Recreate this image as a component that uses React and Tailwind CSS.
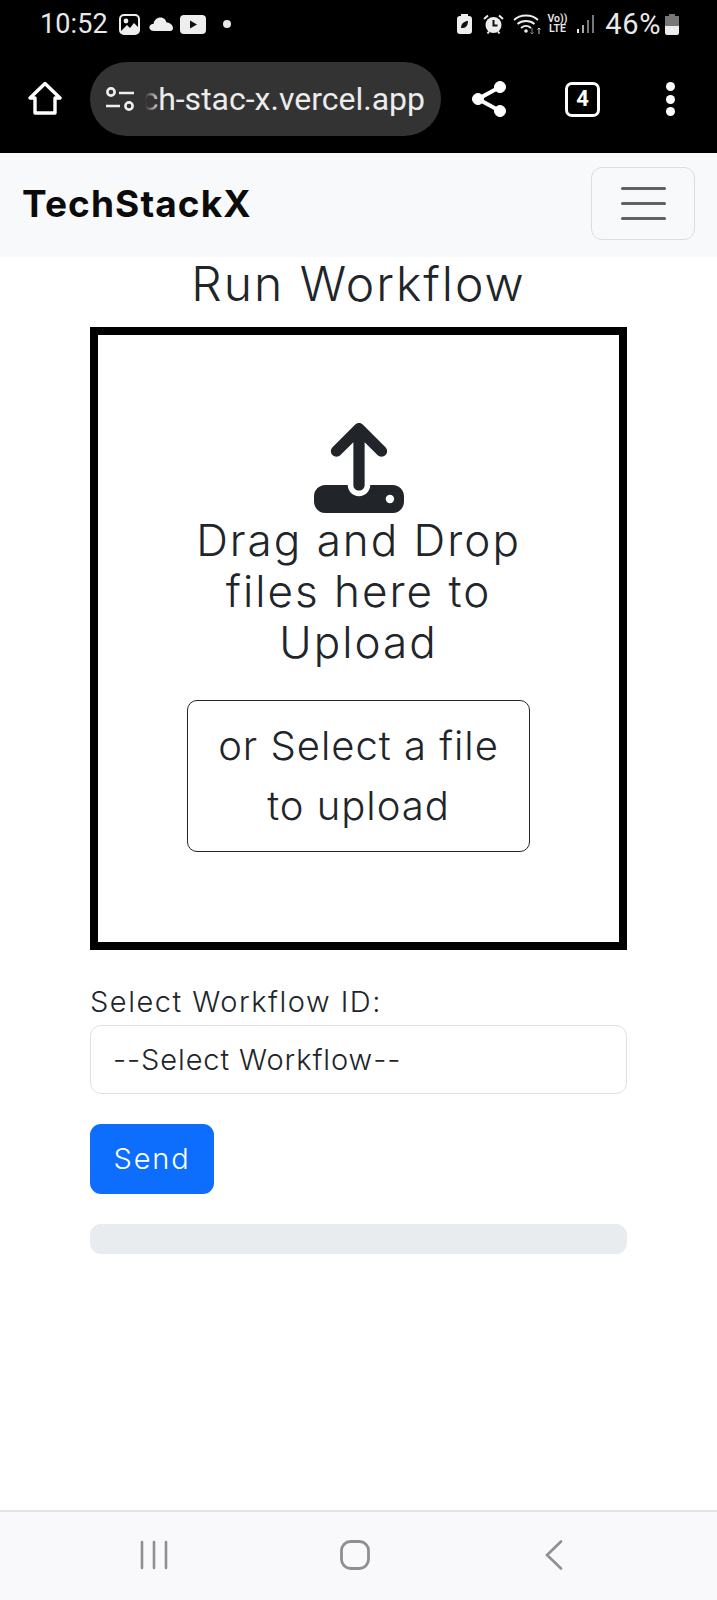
import { FaUpload } from 'react-icons/fa6';

const StatusLeft = () => (
  <div className="flex items-center">
    <span className="text-[27px] leading-none text-[#e8e8e8] font-['Roboto',sans-serif] tracking-[0.1px]">10:52</span>
    {/* gallery */}
    <svg className="ml-[11px]" width="21" height="21" viewBox="0 0 21 21">
      <rect x="1" y="1" width="19" height="19" rx="4" fill="none" stroke="#eee" strokeWidth="2" />
      <circle cx="7" cy="7" r="2.4" fill="#eee" />
      <path d="M2 17 L8 11 L11 14 L15 9 L19 13 V19 H2 Z" fill="#eee" />
    </svg>
    {/* cloud */}
    <svg className="ml-[9px]" width="24" height="14" viewBox="0 0 24 14">
      <path d="M5 14 C1 14 0 11 0.5 9.5 C1 7.5 3 7 4.5 7 C5 3 8 0.5 11.5 0.5 C15 0.5 17 3 17.5 5.5 C21 5.5 24 8 24 11 C24 13 23 14 21 14 Z" fill="#eee" />
    </svg>
    {/* youtube */}
    <svg className="ml-[7px]" width="26" height="19" viewBox="0 0 26 19">
      <rect width="26" height="19" rx="4" fill="#eee" />
      <path d="M10 5.5 L17 9.5 L10 13.5 Z" fill="#111" />
    </svg>
    <span className="ml-[17px] w-[8px] h-[8px] rounded-full bg-[#e8e8e8]" />
  </div>
);

const StatusRight = () => (
  <div className="flex items-center">
    {/* battery saver */}
    <svg width="15" height="20" viewBox="0 0 15 20">
      <rect x="4" y="0" width="7" height="3" fill="#eee" />
      <rect x="0" y="2" width="15" height="18" rx="3" fill="#eee" />
      <path d="M4 14 C4 9 8 7 11 7 C11 11 9 14 6 14 Z" fill="#111" />
    </svg>
    {/* alarm */}
    <svg className="ml-[11px]" width="21" height="21" viewBox="0 0 21 21">
      <circle cx="10.5" cy="11" r="8" fill="#eee" />
      <path d="M1 5 L5 1.5 M20 5 L16 1.5 M4.5 19.5 L6 17.5 M16.5 19.5 L15 17.5" stroke="#eee" strokeWidth="2" />
      <path d="M10.5 6 V11.5 H14.5" stroke="#111" strokeWidth="2" fill="none" />
    </svg>
    {/* wifi */}
    <svg className="ml-[9px]" width="29" height="21" viewBox="0 0 29 21">
      <path d="M1 6 C7 0 19 0 25 6 M4.5 10 C9 6 17 6 21.5 10 M8 14 C11 11.5 15 11.5 18 14" stroke="#eee" strokeWidth="1.8" fill="none" />
      <circle cx="13" cy="17" r="1.8" fill="#eee" />
      <path d="M19 14 V20 M17.5 18.5 L19 20 L20.5 18.5" stroke="#888" strokeWidth="1" fill="none" />
      <path d="M26 20 V14 M24.5 15.5 L26 14 L27.5 15.5" stroke="#ccc" strokeWidth="1" fill="none" />
    </svg>
    <div className="ml-[5px] flex flex-col items-center text-[10.5px] leading-[10px] font-semibold text-[#e8e8e8] font-['Roboto',sans-serif]">
      <span>Vo))</span>
      <span>LTE</span>
    </div>
    {/* signal */}
    <svg className="ml-[10px]" width="18" height="20" viewBox="0 0 18 20">
      <rect x="0" y="15" width="2" height="4" fill="#eee" />
      <rect x="5" y="11" width="2" height="8" fill="#aaa" />
      <rect x="10" y="6" width="2" height="13" fill="#777" />
      <rect x="15" y="1" width="2" height="18" fill="#777" />
    </svg>
    <span className="ml-[10px] text-[29px] leading-none text-[#e8e8e8] font-['Roboto',sans-serif] tracking-[0.6px]">46%</span>
    {/* battery */}
    <svg className="ml-[4px]" width="14" height="21" viewBox="0 0 14 21">
      <rect x="4" y="0" width="6" height="3" fill="#777" />
      <rect x="0" y="2" width="14" height="10" fill="#777" />
      <path d="M0 12 H14 V19 Q14 21 12 21 H2 Q0 21 0 19 Z" fill="#eee" />
    </svg>
  </div>
);

const BrowserBar = () => (
  <div className="flex items-center h-[74px] mt-[12px] pl-[28px]">
    {/* home */}
    <svg width="34" height="34" viewBox="0 0 34 34" fill="none" stroke="#fff" strokeWidth="3.4" strokeLinejoin="round">
      <path d="M2 16 L17 1.5 L32 16 H27 V31 H7 V16 Z" />
    </svg>
    <div className="ml-[28px] w-[351px] h-[74px] rounded-full bg-[#333333] flex items-center pl-[15px]">
      <svg width="30" height="25" viewBox="0 0 30 25" fill="none" stroke="#eee" strokeWidth="2.6">
        <circle cx="6" cy="5" r="3.6" />
        <path d="M14 6 H29 M1 19 H15" />
        <circle cx="24" cy="19" r="3.6" />
      </svg>
      <div className="relative w-[290px] flex justify-end">
        <span className="whitespace-nowrap text-[32px] leading-[42px] text-[#ececec] font-['Roboto',sans-serif]">ch-stac-x.vercel.app</span>
        <div className="absolute left-0 top-0 bottom-0 w-[25px] bg-gradient-to-r from-[#333333] from-40% to-transparent" />
      </div>
    </div>
    {/* share */}
    <svg className="ml-[30px]" width="36" height="38" viewBox="0 0 36 38" fill="#fff" stroke="#fff">
      <path d="M29 7 L7 19 L29 31" fill="none" strokeWidth="4" />
      <circle cx="29" cy="7" r="5.5" />
      <circle cx="7" cy="19" r="5.5" />
      <circle cx="29" cy="31" r="5.5" />
    </svg>
    <div className="ml-[58px] w-[35px] h-[35px] rounded-[7px] border-[3px] border-white flex items-center justify-center text-[22px] font-bold leading-none text-white font-['Roboto',sans-serif]">4</div>
    <div className="ml-[66px] flex flex-col gap-[3.5px]">
      <span className="w-[9px] h-[9px] rounded-full bg-white" />
      <span className="w-[9px] h-[9px] rounded-full bg-white" />
      <span className="w-[9px] h-[9px] rounded-full bg-white" />
    </div>
  </div>
);

export default function App() {
  return (
    <div className="w-[717px] h-[1600px] flex flex-col bg-white text-[#212529] font-['Inter','Lato',sans-serif]">
      <div className="h-[153px] bg-black shrink-0 flex flex-col">
        <div className="h-[50px] flex items-center justify-between pl-[40px] pr-[38px] pb-[2px]">
          <StatusLeft />
          <StatusRight />
        </div>
        <BrowserBar />
      </div>

      <nav className="h-[104px] shrink-0 bg-[#f8f9fa] flex items-center justify-between pl-[22px] pr-[22px] pb-[4px]">
        <span className="text-[37px] font-bold text-[#0b0b0b] tracking-[1.1px] leading-none">TechStackX</span>
        <button className="w-[104px] h-[73px] rounded-[11px] border-[1.5px] border-[#dcdde0] flex flex-col items-center justify-center gap-[12px]">
          <span className="w-[45px] h-[3px] rounded-full bg-[#5f6164]" />
          <span className="w-[45px] h-[3px] rounded-full bg-[#5f6164]" />
          <span className="w-[45px] h-[3px] rounded-full bg-[#5f6164]" />
        </button>
      </nav>

      <main className="flex-1 flex flex-col px-[90px]">
        <h3 className="text-center text-[48px] leading-[52px] font-[350] tracking-[2px] mb-[17px] pt-[1px]">Run Workflow</h3>

        <div className="h-[623px] border-[8px] border-black flex flex-col items-center pt-[88px]">
          <FaUpload size={90} color="#212529" />
          <p className="mt-[2px] text-center text-[44px] leading-[51px] font-[350] tracking-[2px]">
            Drag and Drop<br />files here to<br />Upload
          </p>
          <button className="mt-[32px] w-[343px] h-[152px] rounded-[10px] border border-[#212529] text-center text-[40px] leading-[60px] font-[350] tracking-[1px]">
            or Select a file<br />to upload
          </button>
        </div>

        <label className="mt-[34px] text-[29px] leading-[36px] font-[350] tracking-[1.5px]">Select Workflow ID:</label>
        <select className="mt-[5px] h-[69px] w-full appearance-none bg-white rounded-[11px] border-[1.5px] border-[#dfe1e4] pl-[22px] text-[29px] font-[350] tracking-[0.9px] outline-none">
          <option>--Select Workflow--</option>
        </select>
        <button className="mt-[30px] w-[124px] h-[70px] rounded-[11px] bg-[#0d6efd] text-white text-[29px] font-[350] tracking-[1.8px]">Send</button>
        <div className="mt-[30px] h-[30px] rounded-[11px] bg-[#e9ecef]" />
      </main>

      <div className="h-[90px] shrink-0 border-t-2 border-[#e4e4e8] bg-[#f9f9fc] flex items-center pb-[2px]">
        <svg className="ml-[140px]" width="28" height="30" viewBox="0 0 28 30" stroke="#8d8f94" strokeWidth="2.6" strokeLinecap="round">
          <path d="M2 2 V28 M14 2 V28 M26 2 V28" />
        </svg>
        <svg className="ml-[172px]" width="30" height="30" viewBox="0 0 30 30" fill="none" stroke="#8d8f94" strokeWidth="2.8">
          <rect x="1.5" y="1.5" width="27" height="27" rx="9" />
        </svg>
        <svg className="ml-[175px]" width="18" height="30" viewBox="0 0 18 30" fill="none" stroke="#8d8f94" strokeWidth="2.6" strokeLinecap="round">
          <path d="M16 1.5 L2 15 L16 28.5" />
        </svg>
      </div>
    </div>
  );
}
